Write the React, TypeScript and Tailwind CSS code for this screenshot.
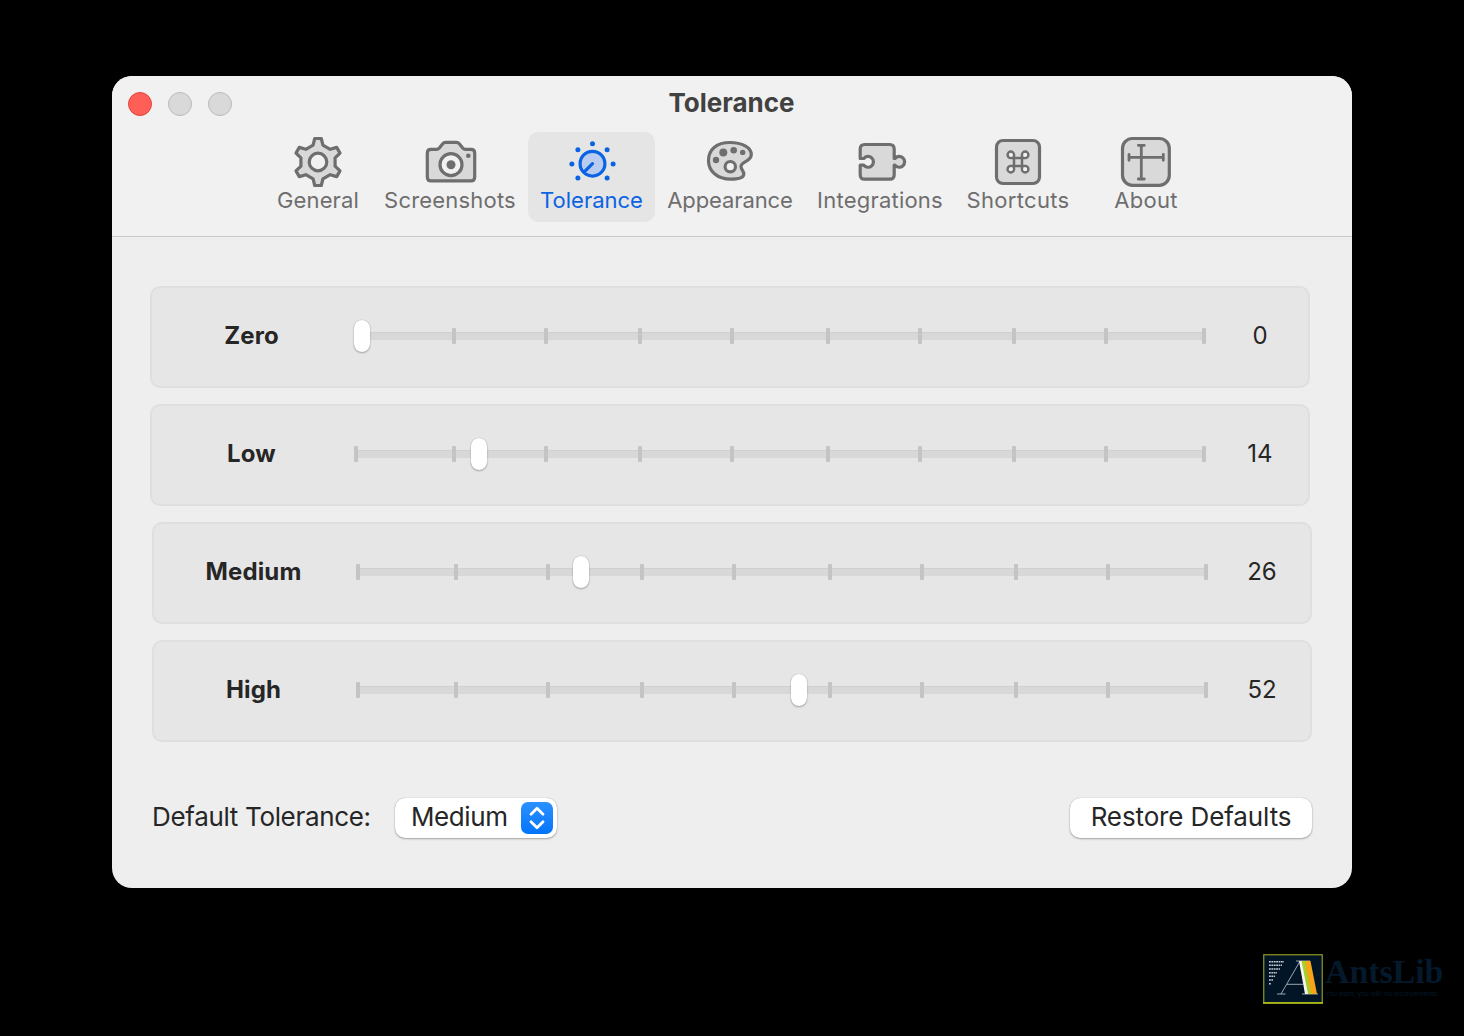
import React from "react";

const GRAY = "#6e6e6e";
const FILL = "#d9d9d9";
const PAPER = "#f1f1f1";
const BLUE = "#0a63e2";

const gearPoints = Array.from({ length: 6 }, (_, i) => {
  const a = (i * Math.PI) / 3 - Math.PI / 2;
  const ux = Math.cos(a), uy = Math.sin(a);
  return [[16.9, -4.9], [23.5, -3.3], [23.5, 3.3], [16.9, 4.9]]
    .map(([r, p]) => `${(318 + ux * r - uy * p).toFixed(2)},${(162 + uy * r + ux * p).toFixed(2)}`)
    .join(" ");
}).join(" ");

type IconProps = { cx: number; color?: string; fill?: string; children: React.ReactNode };

function Icon({ cx, color = GRAY, fill = FILL, children }: IconProps) {
  return (
    <svg className="h-[56px] w-[60px] shrink-0" viewBox={`${cx - 30} 132 60 56`} fill={fill} stroke={color} strokeWidth={3.2} strokeLinecap="round" strokeLinejoin="round">
      {children}
    </svg>
  );
}

const tabs = [
  {
    label: "General", box: "w-[108px]", text: "tracking-[0.15px]",
    icon: (
      <Icon cx={318}>
        <polygon points={gearPoints} />
        <circle cx="318" cy="162" r="8.800" fill={PAPER} />
      </Icon>
    ),
  },
  {
    label: "Screenshots", box: "w-[156px]", text: "tracking-[0.2px]",
    icon: (
      <Icon cx={450}>
        <path d="M431 149.300h5.500c1.300 0 2-.4 2.800-1.300l3-3.800c1-1.300 2-1.800 3.500-1.800h10.400c1.500 0 2.500.5 3.500 1.800l3 3.800c.8.9 1.500 1.300 2.800 1.300h5.500c2.300 0 3.700 1.400 3.700 3.700v23.900c0 2.500-1.400 3.900-3.700 3.900h-40c-2.300 0-3.700-1.400-3.700-3.900v-23.900c0-2.300 1.400-3.700 3.700-3.700z" />
        <circle cx="451" cy="164.700" r="11" fill={PAPER} />
        <circle cx="451" cy="164.700" r="4.500" fill={GRAY} stroke="none" />
        <circle cx="468.300" cy="155.700" r="2.300" fill={GRAY} stroke="none" />
      </Icon>
    ),
  },
  {
    label: "Tolerance", box: "w-[127px]", text: "tracking-normal", active: true,
    icon: (
      <Icon cx={591.5} color={BLUE} fill="#b9cbee">
        <circle cx="592" cy="163.700" r="12.400" />
        <path d="M592 163.700l-7.500 7.500" />
        <g fill={BLUE} stroke="none">
          <circle cx="592" cy="143.700" r="2.500" />
          <circle cx="577.400" cy="149.700" r="2.500" />
          <circle cx="606.600" cy="149.700" r="2.500" />
          <circle cx="571.400" cy="164" r="2.500" />
          <circle cx="612.600" cy="164" r="2.500" />
          <circle cx="577.400" cy="178" r="2.500" />
          <circle cx="606.600" cy="178" r="2.500" />
        </g>
      </Icon>
    ),
  },
  {
    label: "Appearance", box: "w-[150px]", text: "tracking-[-0.1px]",
    icon: (
      <Icon cx={730}>
        <path d="M730 142.500C742 142.500 751.300 147.500 751.300 154.500C751.300 162 741 161 741 166.500C741 170 743.800 170.500 743.800 174C743.800 178 738 179.200 731 179.200C717 179.200 708.500 171 708.500 160.500C708.500 149 717 142.500 730 142.500Z" />
        <circle cx="730.300" cy="166.700" r="5.200" fill={PAPER} />
        <g fill={GRAY} stroke="none">
          <circle cx="716" cy="160" r="3.200" />
          <circle cx="723.300" cy="152.500" r="4" />
          <circle cx="733.700" cy="150.200" r="3.300" />
          <circle cx="742.700" cy="152.400" r="2.700" />
        </g>
      </Icon>
    ),
  },
  {
    label: "Integrations", box: "w-[150px]", text: "tracking-[0.22px]",
    icon: (
      <Icon cx={880}>
        <path d="M860.200 158.500V149Q860.200 144.500 864.700 144.500H889.700Q894.200 144.500 894.200 149V158.500H895A5.400 5.400 0 1 1 895 165.200H894.200V174.700Q894.200 179.200 889.700 179.200H864.700Q860.200 179.200 860.200 174.700V165.200H863.800A5.400 5.400 0 1 0 863.800 158.500Z" />
      </Icon>
    ),
  },
  {
    label: "Shortcuts", box: "w-[126px]", text: "tracking-[0.3px]",
    icon: (
      <Icon cx={1018}>
        <rect x="996.500" y="140.500" width="43" height="43" rx="6.500" />
        <path transform="translate(1018 162)" strokeWidth="2.500" d="M-4-4V-7.200A3.200 3.200 0 1 0-7.200-4H7.200A3.200 3.200 0 1 0 4-7.200V7.200A3.200 3.200 0 1 0 7.200 4H-7.200A3.200 3.200 0 1 0-4 7.200Z" />
        <g fill={PAPER} stroke="none">
          <circle cx="1010.800" cy="154.800" r="1.900" />
          <circle cx="1025.200" cy="154.800" r="1.900" />
          <circle cx="1010.800" cy="169.200" r="1.900" />
          <circle cx="1025.200" cy="169.200" r="1.900" />
        </g>
      </Icon>
    ),
  },
  {
    label: "About", box: "w-[130px]", text: "tracking-[0.3px]",
    icon: (
      <Icon cx={1146}>
        <rect x="1122.500" y="138.500" width="46.800" height="46.800" rx="10" />
        <path strokeWidth="2.800" d="M1141.300 145.300V179M1138.300 145.300h6M1138.300 179h6M1129 157.300H1163.300M1129 154.300v6M1163.300 154.300v6" />
      </Icon>
    ),
  },
];

const ticks = [0, 98, 190, 284, 376, 472, 564, 658, 750, 848];

const levels = [
  { name: "Zero", value: 0, thumb: 0, nudge: "" },
  { name: "Low", value: 14, thumb: 117, nudge: "" },
  { name: "Medium", value: 26, thumb: 217, nudge: "ml-[2px]" },
  { name: "High", value: 52, thumb: 435, nudge: "ml-[2px]" },
];

function Slider({ thumb }: { thumb: number }) {
  return (
    <div className="relative flex h-8 w-[852px] items-center">
      <div className="mx-0.5 h-2 w-full border-t border-[#d0d0d0] bg-[#d8d8d8]" />
      {ticks.map((x) => (
        <span key={x} className={thumb === 0 && x === 0 ? "hidden" : "absolute top-2 h-4 w-1 rounded-[1px] bg-[#c4c4c4]"} style={{ left: x }} />
      ))}
      <span className="absolute top-0 h-8 w-4 rounded-full bg-white shadow-[0_1px_2px_rgba(0,0,0,0.28),0_0_1px_rgba(0,0,0,0.3)]" style={{ left: thumb }} />
    </div>
  );
}

function Watermark() {
  return (
    <div className="absolute left-[1263px] top-[954px] flex w-[190px]">
      <svg className="h-[52px] w-[60px] shrink-0" viewBox="0 0 60 52">
        <rect x="0.750" y="0.750" width="58.500" height="48" fill="#021526" stroke="#8f9a1c" strokeWidth="1.200" />
        <path d="M0 49h60" stroke="#b9c81c" strokeWidth="1.600" />
        <g stroke="#c5cbd2" strokeWidth="1.500" strokeDasharray="1.800 .6">
          <path d="M6 7.700h15M6 11.300h13M6 15h11M6 18.700h8M6 22.300h6M6 26h4M6 29.700h2" />
        </g>
        <path d="M33 7h14M14 40h8.500M18 40L36.500 8M24 30.300h16M39 40h16" stroke="#aeb6be" strokeWidth=".9" fill="none" />
        <path d="M36 7h4l6 33h-4z" fill="#f5f6f4" />
        <path d="M38.500 7h5l6 33h-4.500z" fill="#a5cf2a" />
        <path d="M42 7h5.500l6.500 33h-6z" fill="#f5a516" />
      </svg>
      <div className="flex flex-col pl-[2px]">
        <span className="whitespace-nowrap font-['Liberation_Serif',serif] text-[34px] font-bold leading-[36px] tracking-[-0.1px] text-[#04192b]">AntsLib</span>
        <span className="whitespace-nowrap font-['Liberation_Sans',sans-serif] text-[7px] leading-[7px] text-[#04192b]">You want, you will, no inconvenients.</span>
      </div>
    </div>
  );
}

export default function App() {
  return (
    <div className="relative h-[1036px] w-[1464px] overflow-hidden bg-black pt-[76px] font-[Inter,sans-serif] text-[#262626]">
      <main className="mx-auto h-[812px] w-[1240px] overflow-hidden rounded-[20px] bg-[#eeeeee]">
        <header className="h-[161px] border-b border-[#c9c9c9] bg-[#f1f1f1]">
          <div className="grid h-[56px] grid-cols-[1fr_auto_1fr] items-center px-4">
            <div className="flex gap-4">
              <span className="size-6 rounded-full border border-[#e0443e] bg-[#ff5f57]" />
              <span className="size-6 rounded-full border border-[#bababa] bg-[#d9d9d9]" />
              <span className="size-6 rounded-full border border-[#bababa] bg-[#d9d9d9]" />
            </div>
            <h1 className="-mt-0.5 pr-px text-[26px] font-bold leading-8 text-[#414141]">Tolerance</h1>
          </div>
          <nav className="ml-[152px] flex">
            {tabs.map((t) => (
              <div key={t.label} className={`flex h-[90px] shrink-0 flex-col items-center rounded-[10px] ${t.box} ${t.active ? "bg-[#e5e5e5] text-[#0a63e2]" : "text-[#6e6e6e]"}`}>
                {t.icon}
                <span className={`-mt-0.5 whitespace-nowrap text-[22px] leading-7 ${t.text}`}>{t.label}</span>
              </div>
            ))}
          </nav>
        </header>

        <section className="ml-[38px] mt-[49px] flex flex-col gap-4">
          {levels.map((l) => (
            <div key={l.name} className={`flex h-[102px] w-[1160px] items-center rounded-[10px] border-2 border-[#dfdfdf] bg-[#e6e6e6] pb-0.5 ${l.nudge}`}>
              <span className="w-[199px] text-center text-[24px] font-bold leading-8 tracking-[0.15px]">{l.name}</span>
              <div className="ml-[3px]">
                <Slider thumb={l.thumb} />
              </div>
              <span className="ml-[14px] w-[80px] text-center text-[24px] leading-8">{l.value}</span>
            </div>
          ))}
        </section>

        <footer className="mt-[55px] flex h-[42px] items-center px-10">
          <span className="w-[219px] whitespace-nowrap pb-0.5 text-[26px] leading-8 tracking-[-0.33px]">Default Tolerance:</span>
          <button className="ml-6 flex h-10 w-[162px] items-center justify-between rounded-[10px] bg-white pl-4 pr-1 text-[26px] shadow-[0_1px_2px_rgba(0,0,0,0.3),0_0_1px_rgba(0,0,0,0.3)]">
            <span className="pb-0.5 leading-8 tracking-[-0.4px]">Medium</span>
            <span className="flex size-8 items-center justify-center rounded-[7px] bg-linear-to-b from-[#2b91ff] to-[#0074fb]">
              <svg className="h-6 w-4" viewBox="0 0 16 24" fill="none" stroke="white" strokeWidth="2.800" strokeLinecap="round" strokeLinejoin="round">
                <path d="M2 8.300l6-6 6 6M2 15.700l6 6 6-6" />
              </svg>
            </span>
          </button>
          <button className="ml-auto h-10 w-[242px] whitespace-nowrap rounded-[10px] bg-white pb-0.5 text-[26px] leading-8 tracking-[-0.12px] shadow-[0_1px_2px_rgba(0,0,0,0.3),0_0_1px_rgba(0,0,0,0.3)]">Restore Defaults</button>
        </footer>
      </main>
      <Watermark />
    </div>
  );
}
